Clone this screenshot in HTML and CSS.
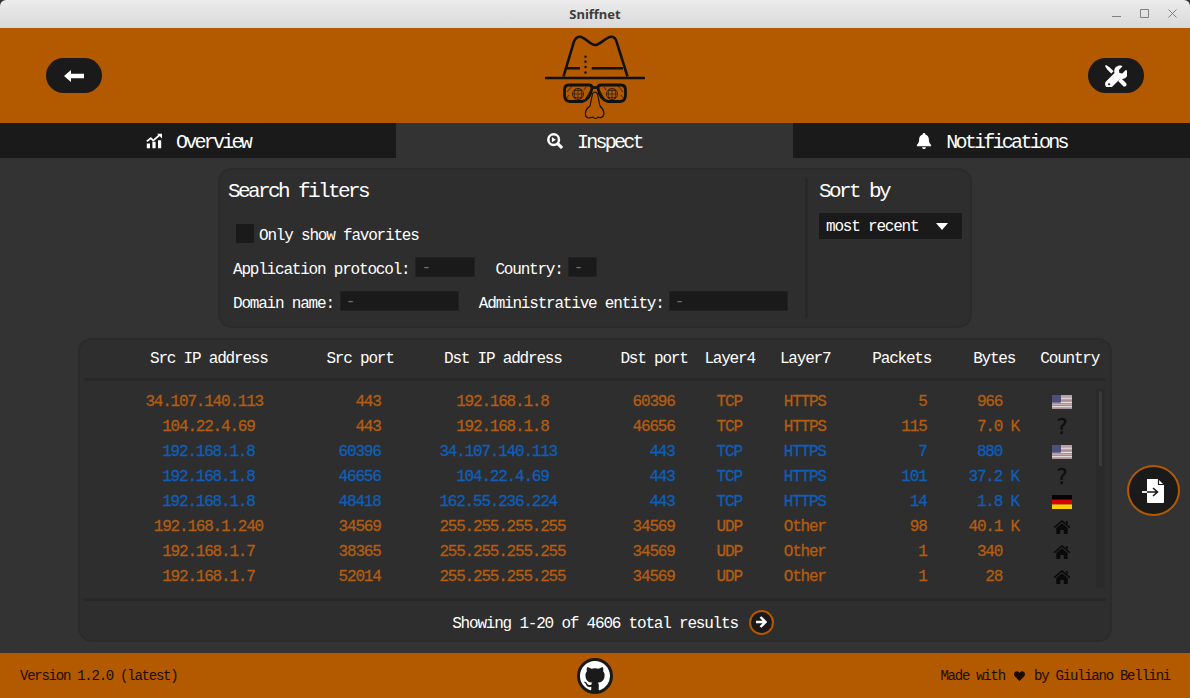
FILE: index.html
```html
<!DOCTYPE html>
<html lang="en">
<head>
<meta charset="utf-8">
<title>Sniffnet</title>
<link rel="stylesheet" href="styles.css">
</head>
<body>
<div class="app">
  <div class="titlebar">
    <span class="title">Sniffnet</span>
    <div class="winbtns">
      <svg class="winbtn" viewBox="0 0 10 10"><path d="M0 7.500h9"/></svg>
      <svg class="winbtn" viewBox="0 0 10 10"><path d="M.5 .5h8v8h-8z"/></svg>
      <svg class="winbtn" viewBox="0 0 10 10"><path d="M.5 .5l8 8m0-8l-8 8"/></svg>
    </div>
  </div>
  <header class="header">
    <button class="pill"><svg viewBox="0 0 20 12" class="pill-icon"><path d="M0 6l7-6v3.800h13v4.400H7V12z" fill="#fff"/></svg></button>
    <svg class="logo" viewBox="545 28 100 95" fill="none" stroke="#111">
      <path d="M546 78h98" stroke-width="2.600" stroke-linecap="round"/>
      <path d="M563.500 76.500L574 41.500Q576 36.500 580 36.700C585 37 590 45 595 45S606 37 611 36.700Q615 36.500 616.500 41.500L627.500 76.500" stroke-width="2.600"/>
      <path d="M565 68.300h15M591.700 68.300h31.300" stroke-width="2.400"/>
      <circle cx="585.500" cy="56.700" r="1.200" fill="#111" stroke="none"/>
      <circle cx="585.500" cy="61.700" r="1.200" fill="#111" stroke="none"/>
      <circle cx="585.500" cy="67" r="1.200" fill="#111" stroke="none"/>
      <circle cx="585.500" cy="72.500" r="1.200" fill="#111" stroke="none"/>
      <g id="lens">
        <path d="M569 85H589Q592 85 592 88Q590 100 582 101.500H570Q564.500 101 564.500 95V90Q564.500 85 569 85z" stroke-width="2.800"/>
        <circle cx="578" cy="94" r="5.500" stroke-width=".8"/>
        <path d="M572.500 94h11M578 88.500v11M574 90.500h8M574 97.500h8M575.500 89c-1.500 3-1.500 7 0 10M580.500 89c1.500 3 1.500 7 0 10" stroke-width=".6"/>
        <path d="M567 92l5-6M566 99l3-4M585 100l5-9M584 90l2-3" stroke-width=".7"/>
      </g>
      <use href="#lens" transform="matrix(-1 0 0 1 1190 0)"/>
      <path d="M592 87.500h6" stroke-width="2.800"/>
      <path d="M592.500 94Q595 90 597.500 94L600 106C602 108 604 110 604 114C603 118 600 118 598 117C597 119 594 119 593 117C591 117 591 118 589 118C584 118 584 110 590 106z" stroke-width="1.200"/>
    </svg>
    <button class="pill"><svg viewBox="0 0 512 512" class="pill-icon wrench"><path fill="#fff" d="M502 127c-4-10-17-13-25-5l-74 74-68-11-11-68 74-74c8-8 5-21-5-25-47-18-102-8-140 30-37 37-47 90-31 136L28 378c-37 37-37 97 0 134s97 37 134 0l194-194c46 16 99 6 136-31 38-38 48-93 30-140zM95 472a25 25 0 1 1 0-50 25 25 0 0 1 0 50z"/><path fill="#fff" d="M200 145L106 51 24 0 0 24l51 82 94 94 55-55zM372 305l-67 67 116 116c19 19 48 19 67 0s19-48 0-67z"/></svg></button>
  </header>
  <nav class="tabs">
    <div class="tab">
      <svg class="tab-icon" viewBox="0 0 20 18"><path fill="#fff" d="M1 12h4v6H1zM8 10h4v8H8zM15 8h4v10h-4z"/><path d="M1 9.500l5-4 3 3 8-7" stroke="#fff" stroke-width="2.200" fill="none"/><path fill="#fff" d="M14 0h6v6z"/></svg>
      <span>Overview</span>
    </div>
    <div class="tab tab-active">
      <svg class="tab-icon" viewBox="0 0 18 18"><circle cx="7.500" cy="7.500" r="6" fill="none" stroke="#fff" stroke-width="2.800"/><path d="M12 12l5 5" stroke="#fff" stroke-width="3.400"/><path d="M5.500 4.500v6l4.500-3z" fill="#fff"/></svg>
      <span>Inspect</span>
    </div>
    <div class="tab">
      <svg class="tab-icon" viewBox="0 0 16 18"><path fill="#fff" d="M8 0c1 0 1.500.7 1.500 1.600C12 2.200 13.500 4.500 13.500 7c0 4 1.300 5 2.500 6.500V15H0v-1.500C1.200 12 2.500 11 2.500 7c0-2.500 1.500-4.800 4-5.400C6.500.7 7 0 8 0zM5.800 16h4.400c0 1.200-1 2-2.200 2s-2.200-.8-2.200-2z"/></svg>
      <span>Notifications</span>
    </div>
  </nav>
  <main class="content">
    <section class="filters">
      <div class="filters-main">
        <h2 class="panel-title">Search filters</h2>
        <label class="favorites"><span class="checkbox"></span><span>Only show favorites</span></label>
        <div class="filter-row row-a">
          <span>Application protocol:</span><span class="input w-app">-</span>
          <span class="second">Country:</span><span class="input w-country">-</span>
        </div>
        <div class="filter-row row-b">
          <span>Domain name:</span><span class="input w-long">-</span>
          <span class="second">Administrative entity:</span><span class="input w-long">-</span>
        </div>
      </div>
      <div class="sort">
        <h2 class="panel-title">Sort by</h2>
        <div class="select"><span>most recent</span><svg viewBox="0 0 12 7" class="caret"><path d="M0 0h12L6 7z" fill="#fff"/></svg></div>
      </div>
    </section>
    <div class="table-area">
      <section class="table">
        <div class="thead">
          <span class="c1">Src IP address</span><span class="c2">Src port</span><span class="c3">Dst IP address</span><span class="c4">Dst port</span><span class="c5">Layer4</span><span class="c6">Layer7</span><span class="c7">Packets</span><span class="c8">Bytes</span><span>Country</span>
        </div>
        <div class="tbody">
          <div class="rows">
            <div class="row in"><span class="d1"> 34.107.140.113</span><span class="d2">  443</span><span class="d3">  192.168.1.8</span><span class="d4">60396</span><span class="d5">TCP</span><span class="d6">HTTPS</span><span class="d7">        5</span><span class="d8"> 966</span><svg class="flag" viewBox="0 0 20 14"><use href="#us"/></svg></div>
            <div class="row in"><span class="d1">   104.22.4.69</span><span class="d2">  443</span><span class="d3">  192.168.1.8</span><span class="d4">46656</span><span class="d5">TCP</span><span class="d6">HTTPS</span><span class="d7">      115</span><span class="d8"> 7.0 K</span><span class="flag unknown">?</span></div>
            <div class="row out"><span class="d1">   192.168.1.8</span><span class="d2">60396</span><span class="d3">34.107.140.113</span><span class="d4">  443</span><span class="d5">TCP</span><span class="d6">HTTPS</span><span class="d7">        7</span><span class="d8"> 880</span><svg class="flag" viewBox="0 0 20 14"><use href="#us"/></svg></div>
            <div class="row out"><span class="d1">   192.168.1.8</span><span class="d2">46656</span><span class="d3">  104.22.4.69</span><span class="d4">  443</span><span class="d5">TCP</span><span class="d6">HTTPS</span><span class="d7">      101</span><span class="d8">37.2 K</span><span class="flag unknown">?</span></div>
            <div class="row out"><span class="d1">   192.168.1.8</span><span class="d2">48418</span><span class="d3">162.55.236.224</span><span class="d4">  443</span><span class="d5">TCP</span><span class="d6">HTTPS</span><span class="d7">       14</span><span class="d8"> 1.8 K</span><svg class="flag" viewBox="0 0 20 14"><use href="#de"/></svg></div>
            <div class="row in"><span class="d1">  192.168.1.240</span><span class="d2">34569</span><span class="d3">255.255.255.255</span><span class="d4">34569</span><span class="d5">UDP</span><span class="d6">Other</span><span class="d7">       98</span><span class="d8">40.1 K</span><svg class="flag" viewBox="0 0 20 16"><use href="#home"/></svg></div>
            <div class="row in"><span class="d1">   192.168.1.7</span><span class="d2">38365</span><span class="d3">255.255.255.255</span><span class="d4">34569</span><span class="d5">UDP</span><span class="d6">Other</span><span class="d7">        1</span><span class="d8"> 340</span><svg class="flag" viewBox="0 0 20 16"><use href="#home"/></svg></div>
            <div class="row in"><span class="d1">   192.168.1.7</span><span class="d2">52014</span><span class="d3">255.255.255.255</span><span class="d4">34569</span><span class="d5">UDP</span><span class="d6">Other</span><span class="d7">        1</span><span class="d8">  28</span><svg class="flag" viewBox="0 0 20 16"><use href="#home"/></svg></div>
          </div>
          <div class="scrollbar"><div class="thumb"></div></div>
        </div>
        <div class="tfoot">
          <span>Showing 1-20 of 4606 total results</span>
          <span class="next"><svg viewBox="0 0 12 12"><path d="M5.500 1l5 5-5 5M1 6h8" stroke="#fff" stroke-width="2.400" fill="none"/></svg></span>
        </div>
      </section>
      <button class="export"><svg viewBox="0 0 24 24"><path fill="#fff" d="M5 0h11l6 6v17a1 1 0 0 1-1 1H6a1 1 0 0 1-1-1z"/><path d="M16.500 0v5.500H22" stroke="#1a1a1a" fill="none" stroke-width="1.200"/><path d="M0 13h5" stroke="#fff" stroke-width="1.800"/><path d="M5 13h10M11 9l4.500 4-4.500 4" stroke="#1a1a1a" fill="none" stroke-width="1.600"/></svg></button>
    </div>
  </main>
  <footer class="footer">
    <span class="foot-left">Version 1.2.0 (latest)</span>
    <span class="github"><svg viewBox="0 0 16 16"><path fill="#fff" d="M8 0C3.580 0 0 3.580 0 8c0 3.540 2.290 6.530 5.470 7.590.4.070.55-.17.55-.38 0-.19-.01-.82-.01-1.490-2.010.37-2.530-.49-2.690-.94-.09-.23-.48-.94-.82-1.130-.28-.15-.68-.52-.01-.53.630-.01 1.080.58 1.230.82.720 1.210 1.870.87 2.330.66.070-.52.280-.87.510-1.070-1.780-.2-3.640-.89-3.640-3.950 0-.87.310-1.590.820-2.150-.08-.2-.36-1.020.08-2.120 0 0 .67-.21 2.200.82.64-.18 1.320-.27 2-.27s1.360.09 2 .27c1.530-1.040 2.200-.82 2.200-.82.44 1.100.16 1.920.08 2.120.51.56.82 1.270.82 2.150 0 3.070-1.870 3.750-3.650 3.950.29.25.54.73.54 1.480 0 1.070-.01 1.930-.01 2.200 0 .21.15.46.55.38A8.010 8.010 0 0 0 16 8c0-4.420-3.580-8-8-8z"/></svg></span>
    <span class="foot-right">Made with <svg class="heart" viewBox="0 0 12 11"><path fill="#1a0c00" d="M6 11L1 6C-.5 4.500-.3 2 1 1c1.500-1.300 3.800-1 5 1 1.200-2 3.500-2.300 5-1 1.300 1 1.500 3.500 0 5z"/></svg> by Giuliano Bellini</span>
  </footer>
</div>
<svg class="defs" aria-hidden="true">
  <defs>
    <g id="us"><rect width="20" height="14" fill="#a9939a"/><path d="M0 1h20M0 3.200h20M8 5.300h12M8 7.400h12M0 9.500h20M0 11.700h20" stroke="#f0e8e8" stroke-width="1"/><path d="M0 1h20M8 5.500h12M0 9.800h20" stroke="#8a5a66" stroke-width=".6"/><rect width="9" height="7.500" fill="#4f4f7c"/></g>
    <g id="de"><rect width="20" height="4.700" fill="#050505"/><rect y="4.700" width="20" height="4.700" fill="#d80000"/><rect y="9.400" width="20" height="4.600" fill="#ffce00"/></g>
    <g id="home"><path fill="#0a0a0a" d="M10 0l9.500 8-1 1.300L10 2.300 1.500 9.300l-1-1.300z"/><path fill="#0a0a0a" d="M3.500 9L10 3.700 16.500 9v7H12v-4.500H8V16H3.500z"/><path fill="#0a0a0a" d="M14.500 1h2v4l-2-1.700z"/></g>
  </defs>
</svg>
</body>
</html>
```

FILE: styles.css
```css
* { box-sizing: border-box; }
html, body { margin: 0; padding: 0; }
body { font-family: "Liberation Mono", "DejaVu Sans Mono", monospace; color: #fff; background: #333; }
.app { width: 1190px; height: 698px; display: flex; flex-direction: column; overflow: hidden; --c: 8.4px; }

.titlebar { height: 28px; flex: none; display: flex; align-items: center; justify-content: center; position: relative; background: linear-gradient(#ececec, #d9d9d9); border-radius: 6px 6px 0 0; }
.title { font: bold 13px "Noto Sans", "DejaVu Sans", sans-serif; color: #3d3d3d; }
.winbtns { position: absolute; right: 12px; top: 9px; display: flex; gap: 18px; }
.winbtn { width: 10px; height: 10px; fill: none; stroke: #808080; stroke-width: 1; }

.header { height: 95px; flex: none; background: #b35900; display: flex; align-items: center; justify-content: space-between; padding: 0 46px; }
.pill { width: 56px; height: 35px; border: 0; border-radius: 18px; background: #1a1a1a; display: flex; align-items: center; justify-content: center; padding: 0; }
.pill-icon { width: 20px; height: 12px; display: block; }
.wrench { width: 22px; height: 22px; }
.logo { width: 100px; height: 95px; display: block; }

.tabs { height: 35px; flex: none; display: grid; grid-template-columns: 396px 397px 397px; background: #1a1a1a; }
.tab { display: flex; align-items: center; justify-content: center; gap: 14px; font-size: 20px; letter-spacing: -2.75px; }
.tab span { line-height: 39px; height: 35px; }
.tab-active { background: #333; }
.tab-icon { width: 16px; height: 16px; display: block; }

.content { flex: 1; min-height: 0; background: #333; display: flex; flex-direction: column; align-items: center; padding-top: 10px; }
.filters { width: 754px; height: 160px; flex: none; border-radius: 14px; background: #2e2e2e; border: 2px solid #2b2b2b; display: flex; padding: 8px; }
.filters-main { width: 580px; flex: none; border-right: 3px solid #282828; }
.panel-title { margin: 0; font-size: 21px; font-weight: normal; letter-spacing: -2.6px; line-height: 28px; height: 26px; }
.favorites, .filter-row { display: flex; align-items: flex-start; font-size: 16px; letter-spacing: -1.2px; line-height: 26px; }
.favorites { margin: 19px 0 0 8px; height: 20px; gap: 5px; }
.checkbox { width: 18px; height: 19px; margin-top: 1px; background: #1a1a1a; display: block; }
.filter-row { margin: 14px 0 0 5px; height: 20px; }
.input { height: 20px; margin-left: 6px; padding-left: 5px; background: #1a1a1a; color: #6f6f6f; line-height: 20px; border: 1px solid #222; }
.w-app { width: 60px; }
.w-country { width: 29px; }
.w-long { width: 119px; }
.second { margin-left: 20px; }
.second + .input { margin-left: 5px; }
.sort { padding-left: 11px; flex: 1; }
.select { margin-top: 9px; width: 143px; height: 26px; background: #1a1a1a; display: flex; align-items: center; justify-content: space-between; padding: 0 14px 0 7px; font-size: 16px; letter-spacing: -1.2px; }
.select span { line-height: 28px; height: 26px; }
.caret { width: 12px; height: 7px; display: block; }

.table-area { margin-top: 10px; width: 100%; position: relative; display: flex; justify-content: center; flex: none; }
.table { width: 1034px; height: 304px; border-radius: 14px; background: #2e2e2e; border: 2px solid #2b2b2b; display: flex; flex-direction: column; font-size: 16px; letter-spacing: -1.2px; }
.thead { height: 41px; flex: none; margin: 0 4px; padding-left: 66px; display: flex; align-items: center; border-bottom: 3px solid #282828; white-space: pre; }
.thead span { flex: none; }
.c1 { width: calc(var(--c) * 21); }
.c2 { width: calc(var(--c) * 14); }
.c3 { width: calc(var(--c) * 21); }
.c4 { width: calc(var(--c) * 10); }
.c5 { width: calc(var(--c) * 9); }
.c6 { width: calc(var(--c) * 11); }
.c7 { width: calc(var(--c) * 12); }
.c8 { width: calc(var(--c) * 8); }
.tbody { height: 220px; flex: none; display: flex; margin: 0 4px; padding: 0 1px 0 0; border-bottom: 3px solid #282828; }
.rows { flex: 1; padding: 8px 0 0 53px; }
.row { height: 25px; display: flex; align-items: center; white-space: pre; -webkit-text-stroke: .3px currentColor; }
.row span { flex: none; }
.in { color: #b35d12; }
.out { color: #0f5fb8; }
.d1 { width: calc(var(--c) * 24); }
.d2 { width: calc(var(--c) * 12); }
.d3 { width: calc(var(--c) * 23); }
.d4 { width: calc(var(--c) * 10); }
.d5 { width: calc(var(--c) * 8); }
.d6 { width: calc(var(--c) * 8); }
.d7 { width: calc(var(--c) * 14); }
.d8 { width: calc(var(--c) * 9); }
.flag { width: 20px; height: 14px; flex: none; display: block; margin-left: 8px; }
.row span.unknown { color: #0e0e0e; height: 18px; font: normal 21px/18px "DejaVu Sans", sans-serif; text-align: center; letter-spacing: 0; }
.scrollbar { width: 9px; height: 199px; flex: none; margin: 8px 0 0 2px; background: #2a2a2a; border-radius: 4px; display: flex; justify-content: center; }
.thumb { width: 3px; height: 75px; margin-top: 2px; background: #3a3a3a; border-radius: 2px; }
.tfoot { flex: 1; display: flex; align-items: center; justify-content: center; gap: 11px; padding: 3px 0 0 36px; }
.tfoot > span:first-child { line-height: 26px; height: 22px; }
.next { width: 25px; height: 25px; border-radius: 50%; background: #1a1a1a; border: 2px solid #b35900; display: flex; align-items: center; justify-content: center; }
.next svg { width: 12px; height: 12px; display: block; }
.export { position: absolute; right: 10px; top: 127px; width: 53px; height: 51px; padding: 0; border-radius: 50%; background: #1a1a1a; border: 2px solid #b35900; display: flex; align-items: center; justify-content: center; }
.export svg { width: 24px; height: 24px; display: block; }

.footer { height: 45px; flex: none; background: #b35900; display: grid; grid-template-columns: 1fr auto 1fr; align-items: center; padding: 0 20px; color: #1a0c00; font-size: 14px; letter-spacing: -1.25px; }
.github { width: 36px; height: 36px; border-radius: 50%; background: #1a1a1a; display: flex; align-items: center; justify-content: center; }
.github svg { width: 30px; height: 30px; display: block; }
.foot-right { text-align: right; }
.heart { width: 11px; height: 10px; margin: 0 2px; vertical-align: -1px; }
.defs { position: absolute; width: 0; height: 0; }
```
